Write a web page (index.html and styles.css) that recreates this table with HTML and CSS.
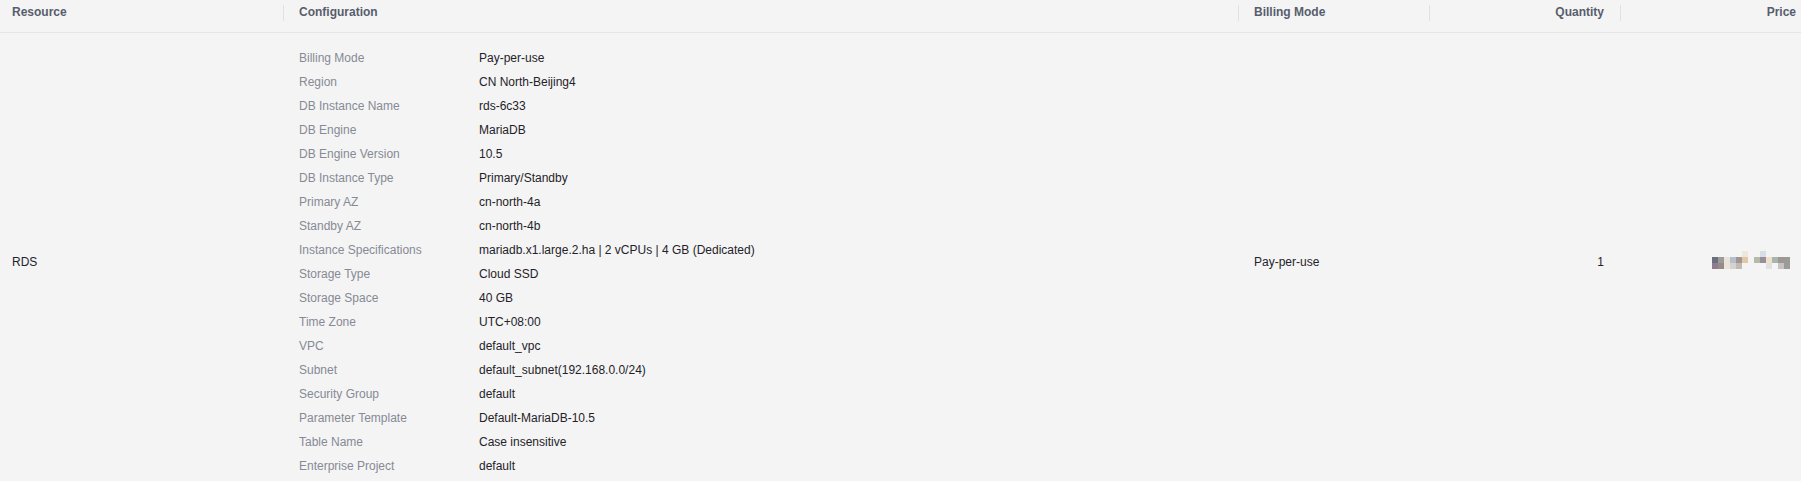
FILE: index.html
```html
<!DOCTYPE html>
<html>
<head>
<meta charset="utf-8">
<link rel="stylesheet" href="styles.css">
</head>
<body>
<div class="table">
  <div class="thead">
    <div class="th">Resource</div>
    <div class="th sep">Configuration</div>
    <div class="th sep">Billing Mode</div>
    <div class="th sep right">Quantity</div>
    <div class="th sep right">Price</div>
  </div>
  <div class="tbody">
    <div class="td">RDS</div>
    <div class="td config">
      <div class="kv">
        <span class="k">Billing Mode</span><span class="v">Pay-per-use</span>
        <span class="k">Region</span><span class="v">CN North-Beijing4</span>
        <span class="k">DB Instance Name</span><span class="v">rds-6c33</span>
        <span class="k">DB Engine</span><span class="v">MariaDB</span>
        <span class="k">DB Engine Version</span><span class="v">10.5</span>
        <span class="k">DB Instance Type</span><span class="v">Primary/Standby</span>
        <span class="k">Primary AZ</span><span class="v">cn-north-4a</span>
        <span class="k">Standby AZ</span><span class="v">cn-north-4b</span>
        <span class="k">Instance Specifications</span><span class="v">mariadb.x1.large.2.ha | 2 vCPUs | 4 GB (Dedicated)</span>
        <span class="k">Storage Type</span><span class="v">Cloud SSD</span>
        <span class="k">Storage Space</span><span class="v">40 GB</span>
        <span class="k">Time Zone</span><span class="v">UTC+08:00</span>
        <span class="k">VPC</span><span class="v">default_vpc</span>
        <span class="k">Subnet</span><span class="v">default_subnet(192.168.0.0/24)</span>
        <span class="k">Security Group</span><span class="v">default</span>
        <span class="k">Parameter Template</span><span class="v">Default-MariaDB-10.5</span>
        <span class="k">Table Name</span><span class="v">Case insensitive</span>
        <span class="k">Enterprise Project</span><span class="v">default</span>
      </div>
    </div>
    <div class="td">Pay-per-use</div>
    <div class="td right">1</div>
    <div class="td right price">
      <div class="blur" aria-label="price hidden">
        <div class="px r1"></div>
        <div class="px r2"></div>
        <div class="px r3"></div>
      </div>
    </div>
  </div>
</div>
</body>
</html>
```
FILE: styles.css
```css
html, body {
  margin: 0;
  padding: 0;
  background: #f4f4f4;
  overflow: hidden;
}
body {
  font-family: "Liberation Sans", Arial, sans-serif;
  font-size: 12px;
  color: #1f2329;
}
.table {
  width: 1812px;
}
.thead, .tbody {
  display: grid;
  grid-template-columns: 283px 955px 191px 191px 192px;
}
.thead {
  height: 32px;
  border-bottom: 1px solid #e6e6e6;
}
.th {
  position: relative;
  line-height: 24px;
  font-weight: bold;
  color: #575d6c;
  padding: 0 16px;
}
.th:first-child {
  padding-left: 12px;
}
.th.sep::before {
  content: "";
  position: absolute;
  left: 0;
  top: 5px;
  width: 1px;
  height: 16px;
  background: #dfe1e6;
}
.right {
  text-align: right;
}
.tbody {
  padding: 13px 0 11px;
}
.td {
  display: flex;
  align-items: center;
  padding: 0 16px;
  line-height: 24px;
  color: #1f2329;
}
.td:first-child {
  padding-left: 12px;
}
.td.right {
  justify-content: flex-end;
}
.kv {
  display: grid;
  grid-template-columns: 180px auto;
}
.k {
  color: #868a94;
  line-height: 24px;
}
.v {
  color: #1f2329;
  line-height: 24px;
}
.blur {
  display: flex;
  flex-direction: column;
  width: 84px;
  margin-top: -4px;
}
.px {
  height: 6px;
  width: 84px;
}
.r1 {
  background: linear-gradient(to right,
    transparent 0 30px,
    #efe6dc 30px 36px,
    transparent 36px 48px,
    #d9dde8 48px 54px,
    transparent 54px);
}
.r2 {
  background: linear-gradient(to right,
    #6b6f7b 0 6px,
    #9b9c98 6px 12px,
    #ebe3da 12px 18px,
    #b6c0cc 18px 24px,
    #a09591 24px 30px,
    #e2c7a8 30px 36px,
    transparent 36px 42px,
    #b7baa8 42px 48px,
    #978f98 48px 54px,
    #f0e0c8 54px 60px,
    #a6b5ae 60px 66px,
    #9e9895 66px 72px,
    #9a9a96 72px 78px,
    transparent 78px 84px);
}
.r3 {
  background: linear-gradient(to right,
    #8d7b8f 0 6px,
    #988b83 6px 12px,
    #ebe4db 12px 18px,
    #d6d3cc 18px 24px,
    #c3b9b4 24px 30px,
    transparent 30px 54px,
    #e0e0e2 54px 60px,
    transparent 60px 66px,
    #c9c3c5 66px 72px,
    #9b9b98 72px 78px,
    transparent 78px 84px);
}
```
